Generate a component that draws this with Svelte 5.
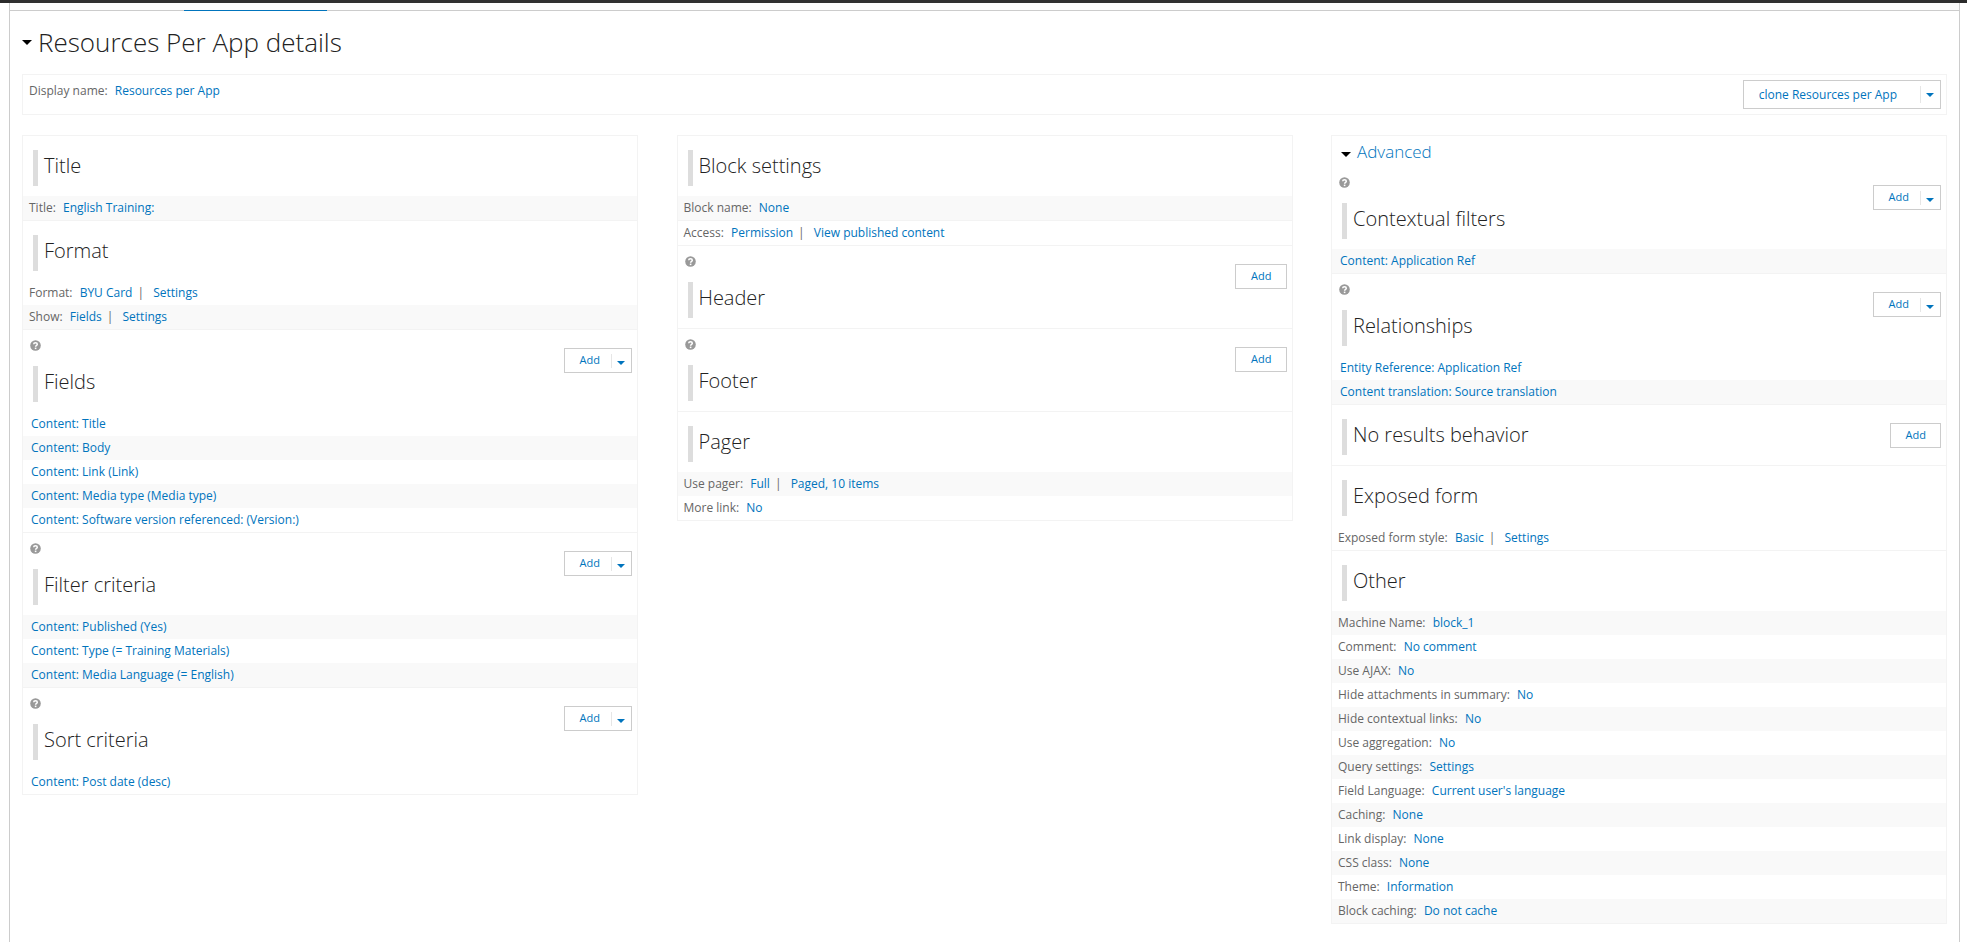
<script lang="ts">
	interface iRow {
		label?: string
		links: string[]
		divided?: boolean
	}
	interface iSection {
		title: string
		help?: boolean
		add?: 'single' | 'drop'
		plainFirst?: boolean
		rows: iRow[]
	}

	const item = (text: string): iRow => ({ links: [text] })
	const setting = (label: string, ...links: string[]): iRow => ({ label, links })

	const first: iSection[] = [
		{ title: 'Title', rows: [setting('Title:', 'English Training:')] },
		{
			title: 'Format',
			plainFirst: true,
			rows: [setting('Format:', 'BYU Card', 'Settings'), setting('Show:', 'Fields', 'Settings')]
		},
		{
			title: 'Fields',
			help: true,
			add: 'drop',
			plainFirst: true,
			rows: [
				item('Content: Title'),
				item('Content: Body'),
				item('Content: Link (Link)'),
				item('Content: Media type (Media type)'),
				item('Content: Software version referenced: (Version:)')
			]
		},
		{
			title: 'Filter criteria',
			help: true,
			add: 'drop',
			rows: [
				item('Content: Published (Yes)'),
				item('Content: Type (= Training Materials)'),
				item('Content: Media Language (= English)')
			]
		},
		{
			title: 'Sort criteria',
			help: true,
			add: 'drop',
			plainFirst: true,
			rows: [item('Content: Post date (desc)')]
		}
	]

	const second: iSection[] = [
		{
			title: 'Block settings',
			rows: [
				setting('Block name:', 'None'),
				{ label: 'Access:', links: ['Permission', 'View published content'], divided: true }
			]
		},
		{ title: 'Header', help: true, add: 'single', rows: [] },
		{ title: 'Footer', help: true, add: 'single', rows: [] },
		{
			title: 'Pager',
			rows: [setting('Use pager:', 'Full', 'Paged, 10 items'), setting('More link:', 'No')]
		}
	]

	const third: iSection[] = [
		{
			title: 'Contextual filters',
			help: true,
			add: 'drop',
			rows: [item('Content: Application Ref')]
		},
		{
			title: 'Relationships',
			help: true,
			add: 'drop',
			plainFirst: true,
			rows: [
				item('Entity Reference: Application Ref'),
				item('Content translation: Source translation')
			]
		},
		{ title: 'No results behavior', add: 'single', rows: [] },
		{
			title: 'Exposed form',
			plainFirst: true,
			rows: [setting('Exposed form style:', 'Basic', 'Settings')]
		},
		{
			title: 'Other',
			rows: [
				setting('Machine Name:', 'block_1'),
				setting('Comment:', 'No comment'),
				setting('Use AJAX:', 'No'),
				setting('Hide attachments in summary:', 'No'),
				setting('Hide contextual links:', 'No'),
				setting('Use aggregation:', 'No'),
				setting('Query settings:', 'Settings'),
				setting('Field Language:', "Current user's language"),
				setting('Caching:', 'None'),
				setting('Link display:', 'None'),
				setting('CSS class:', 'None'),
				setting('Theme:', 'Information'),
				setting('Block caching:', 'Do not cache')
			]
		}
	]
</script>

{#snippet arrow()}
	<svg class="arrow" viewBox="0 0 10 5" aria-hidden="true"><path d="M0 0h10L5 5z" /></svg>
{/snippet}

{#snippet bucket(section: iSection)}
	<section>
		<div class="head">
			<div class="heading">
				{#if section.help}
					<a class="help" href="#help" aria-label="Help: {section.title}">
						<svg viewBox="0 0 11 11" aria-hidden="true">
							<circle cx="5.5" cy="5.5" r="5.3" fill="#999" />
							<path
								d="M3.7 4.2C3.7 2.2 7.3 2.2 7.3 4.2C7.3 5.4 5.6 5.3 5.6 6.8"
								fill="none"
								stroke="#fff"
								stroke-width="1.5"
							/>
							<path d="M4.8 7.6h1.6v1.5H4.8z" fill="#fff" />
						</svg>
					</a>
				{/if}
				<h3>{section.title}</h3>
			</div>
			{#if section.add}
				<div class="button-group">
					<button type="button" class="action">Add</button>
					{#if section.add === 'drop'}
						<button type="button" class="toggle" aria-label="More {section.title} actions">
							{@render arrow()}
						</button>
					{/if}
				</div>
			{/if}
		</div>
		<div class="rows" class:plain-first={section.plainFirst}>
			{#each section.rows as row}
				<div class="row" class:item={!row.label} class:divided={row.divided}>
					{#if row.label}<span class="label">{row.label}</span>{/if}
					{#each row.links as link, i}
						{#if i > 0}<span class="bar">|</span>{/if}
						<a href="#edit">{link}</a>
					{/each}
				</div>
			{/each}
		</div>
	</section>
{/snippet}

<div class="page">
	<div class="toolbar"></div>
	<div class="panel">
		<div class="tabs"><span class="active"></span></div>
		<details class="display" open>
			<summary>{@render arrow()}<h1>Resources Per App details</h1></summary>

			<div class="display-top">
				<div class="name">
					<span class="label">Display name:</span>
					<a href="#name">Resources per App</a>
				</div>
				<div class="button-group large">
					<button type="button" class="action">clone Resources per App</button>
					<button type="button" class="toggle" aria-label="More display actions">
						{@render arrow()}
					</button>
				</div>
			</div>

			<div class="columns">
				<div class="column">
					{#each first as section}{@render bucket(section)}{/each}
				</div>
				<div class="column">
					{#each second as section}{@render bucket(section)}{/each}
				</div>
				<details class="column" open>
					<summary class="advanced">{@render arrow()}<span>Advanced</span></summary>
					{#each third as section}{@render bucket(section)}{/each}
				</details>
			</div>
		</details>
	</div>
</div>

<style>
	:global(body) {
		background: #fff;
	}

	.page {
		display: flex;
		flex-direction: column;
		min-height: 100vh;
		font-family: 'Open Sans', 'Noto Sans', sans-serif;
		font-size: 12px;
		color: #666;
	}

	.toolbar {
		height: 3px;
		background: #2b2b2b;
	}

	.panel {
		flex: 1;
		margin: 0 7px 0 9px;
		border: 1px solid #ccc;
		border-width: 0 1px;
	}

	.tabs {
		display: flex;
		height: 8px;
		background: linear-gradient(#ccc, #ccc) bottom / 100% 1px no-repeat #f9f9f9;
	}

	.active {
		width: 143px;
		margin-left: 174px;
		border-bottom: 1px solid #0074bd;
	}

	.display {
		padding: 0 12px;
	}

	summary {
		display: flex;
		align-items: center;
		gap: 6px;
		list-style: none;
		cursor: pointer;
	}

	.display > summary {
		height: 63px;
	}

	h1 {
		margin: 0;
		padding-bottom: 2px;
		font-size: 26px;
		font-weight: 300;
		line-height: 36px;
		color: #222;
	}

	.arrow {
		width: 10px;
		height: 5px;
		fill: #000;
	}

	a {
		color: #0074bd;
		text-decoration: none;
	}

	.display-top {
		display: flex;
		justify-content: space-between;
		align-items: flex-start;
		padding: 5px;
		border: 1px solid #f3f3f3;
	}

	.name {
		padding-left: 1px;
		line-height: 22px;
	}

	.label {
		margin-right: 4px;
	}

	.columns {
		display: grid;
		grid-template-columns: repeat(3, 1fr);
		column-gap: 2%;
		align-items: start;
		margin-top: 20px;
	}

	.column {
		border: 1px solid #f3f3f3;
	}

	.advanced {
		height: 31px;
		padding-left: 9px;
		font-size: 17px;
		font-weight: 300;
		color: #0074bd;
	}

	.advanced .arrow {
		margin-top: 6px;
	}

	section + section {
		border-top: 1px solid #f3f3f3;
	}

	.head {
		display: flex;
		justify-content: space-between;
		align-items: flex-start;
	}

	.help {
		display: block;
		width: 11px;
		height: 12px;
		padding: 10px 0 0 7px;
	}

	.help svg {
		display: block;
		height: 11px;
	}

	h3 {
		margin: 14px 0 10px 10px;
		padding: 0 0 4px 6px;
		border-left: 5px solid #ddd;
		font-size: 20px;
		font-weight: 300;
		line-height: 32px;
		color: #222;
	}

	.button-group {
		display: flex;
		align-items: center;
		box-sizing: border-box;
		height: 25px;
		margin: 18px 5px 0 0;
		border: 1px solid #ccc;
		background: #fff;
	}

	.button-group.large {
		height: 29px;
		margin: 0;
	}

	button {
		border: 0;
		background: none;
		font: inherit;
		color: #0074bd;
		cursor: pointer;
	}

	.action {
		padding: 0 14px 2px 15px;
		font-size: 11px;
		line-height: 21px;
	}

	.large .action {
		padding: 0 23px 0 15px;
		font-size: 12px;
	}

	.toggle {
		display: flex;
		align-items: center;
		height: 14px;
		padding: 4px 6px 0 5px;
		margin-left: -3px;
		border-left: 1px solid #e6e6e6;
	}

	.large .toggle {
		height: 17px;
		margin-left: 0;
		padding-top: 0;
	}

	.toggle .arrow {
		width: 8px;
		height: 4px;
		fill: #0074bd;
	}

	.row {
		padding: 0 6px;
		line-height: 24px;
	}

	.row.item {
		padding-left: 8px;
	}

	.row.divided {
		border-top: 1px solid #f3f3f3;
	}

	.rows:not(.plain-first) .row:nth-child(odd),
	.rows.plain-first .row:nth-child(even) {
		background: #f9f9f9;
	}

	.bar {
		margin: 0 6px 0 5px;
	}
</style>
